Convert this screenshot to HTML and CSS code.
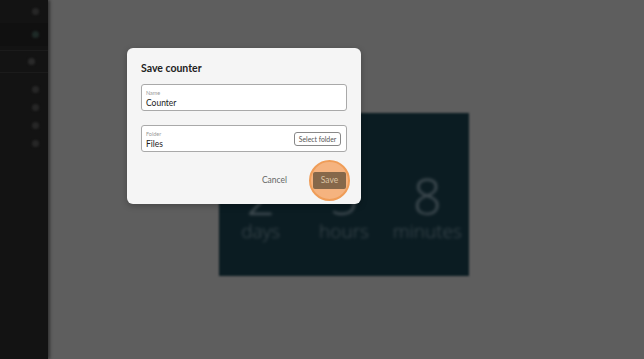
FILE: index.html
```html
<!DOCTYPE html>
<html>
<head>
<meta charset="utf-8">
<link rel="stylesheet" href="styles.css">
</head>
<body>
<div class="app">
  <aside class="sidebar">
    <div class="side-row"><span class="dot"></span></div>
    <div class="side-row side-row-band"><span class="dot dot-green"></span></div>
    <div class="side-row side-row-line"><span class="dot dot-left"></span></div>
    <div class="side-list">
      <span class="dot"></span>
      <span class="dot"></span>
      <span class="dot"></span>
      <span class="dot"></span>
    </div>
  </aside>
  <main class="main">
    <section class="counter">
      <div class="counter-cols">
        <div class="col"><div class="num">2</div><div class="unit">days</div></div>
        <div class="col"><div class="num">5</div><div class="unit">hours</div></div>
        <div class="col"><div class="num">8</div><div class="unit">minutes</div></div>
      </div>
    </section>
  </main>
</div>

<div class="dialog">
  <h2 class="title">Save counter</h2>
  <div class="field">
    <div class="field-text">
      <div class="label">Name</div>
      <div class="value">Counter</div>
    </div>
  </div>
  <div class="field field-folder">
    <div class="field-text">
      <div class="label">Folder</div>
      <div class="value">Files</div>
    </div>
    <button class="select-btn">Select folder</button>
  </div>
  <div class="actions">
    <button class="cancel">Cancel</button>
    <div class="save-wrap">
      <span class="highlight"></span>
      <button class="save">Save</button>
    </div>
  </div>
</div>
</body>
</html>
```
FILE: styles.css
```css
* { box-sizing: border-box; }
html, body { margin: 0; padding: 0; }
body {
  width: 644px;
  height: 359px;
  overflow: hidden;
  background: #5e5e5e;
  font-family: Lato, "Open Sans", sans-serif;
  position: relative;
}
.app {
  display: flex;
  height: 359px;
}
.sidebar {
  width: 48px;
  flex: none;
  background: #131313;
  box-shadow: 2px 0 3px rgba(0,0,0,0.45);
  display: flex;
  flex-direction: column;
}
.side-row {
  height: 23px;
  display: flex;
  align-items: center;
  justify-content: flex-end;
  padding-right: 9px;
}
.side-row-band { background: #101010; }
.side-row-line {
  border-top: 1px solid #1b1b1b;
  border-bottom: 1px solid #1b1b1b;
  padding-right: 13px;
  margin-top: 4px;
}
.dot {
  width: 7px;
  height: 7px;
  border-radius: 50%;
  background: #272727;
  filter: blur(1px);
}
.dot-green { background: #1e2a27; }
.dot-left { background: #2a2a2a; }
.side-list {
  display: flex;
  flex-direction: column;
  align-items: flex-end;
  padding-right: 9px;
  padding-top: 13px;
  gap: 11px;
}
.main {
  flex: 1;
  padding: 113px 0 0 171px;
}
.counter {
  width: 250px;
  height: 163px;
  background: #0b1c22;
  filter: blur(1px);
  display: flex;
  align-items: flex-end;
  padding-bottom: 34px;
}
.counter-cols {
  display: grid;
  grid-template-columns: repeat(3, 1fr);
  width: 100%;
  color: #465157;
  text-align: center;
}
.num {
  font-family: "Open Sans", sans-serif;
  font-weight: 300;
  font-size: 50px;
  line-height: 46px;
  filter: blur(1.2px);
}
.unit {
  font-family: "Open Sans", sans-serif;
  font-weight: 300;
  font-size: 19px;
  line-height: 22px;
  margin-top: 1px;
  filter: blur(1.2px);
}
.dialog {
  position: absolute;
  left: 127px;
  top: 48px;
  width: 234px;
  height: 156px;
  background: #f5f5f5;
  border-radius: 6px;
  padding: 13px 14px 15px 14px;
  display: flex;
  flex-direction: column;
  box-shadow: 0 2px 6px rgba(0,0,0,0.25);
}
.title {
  margin: 0;
  font-size: 10.5px;
  font-weight: 700;
  line-height: 14px;
  color: #222;
}
.field {
  margin-top: 9px;
  height: 27px;
  border: 1px solid #a9a9a9;
  border-radius: 3px;
  background: #fff;
  display: flex;
  align-items: center;
  padding: 0 5px 0 4px;
}
.field-folder { margin-top: 14px; }
.field-text {
  flex: 1;
  display: flex;
  flex-direction: column;
  padding-top: 4px;
}
.label {
  font-size: 5.5px;
  line-height: 7px;
  color: #9a9a9a;
}
.value {
  font-size: 8.5px;
  line-height: 11px;
  margin-top: 1px;
  color: #222;
}
.select-btn {
  font-family: inherit;
  width: 47px;
  height: 14px;
  font-size: 6.8px;
  color: #555;
  background: #fff;
  border: 1px solid #888;
  border-radius: 3px;
  padding: 0;
  margin-top: 1px;
}
.actions {
  margin-top: auto;
  display: flex;
  justify-content: flex-end;
  align-items: center;
  gap: 26px;
  padding-right: 1px;
}
.cancel {
  font-family: inherit;
  background: none;
  border: none;
  padding: 0;
  font-size: 8.5px;
  line-height: 17px;
  color: #666;
}
.save-wrap {
  position: relative;
  width: 33px;
  height: 17px;
  display: flex;
}
.save {
  position: relative;
  font-family: inherit;
  width: 33px;
  height: 17px;
  border: none;
  border-radius: 2px;
  background: #86684a;
  color: #dcc6a6;
  font-size: 8.5px;
  line-height: 17px;
  padding: 0;
  z-index: 1;
}
.highlight {
  position: absolute;
  left: -4px;
  top: -12px;
  width: 41px;
  height: 41px;
  border-radius: 50%;
  background: #f5b37f;
  border: 2px solid #ef9d58;
}
```
